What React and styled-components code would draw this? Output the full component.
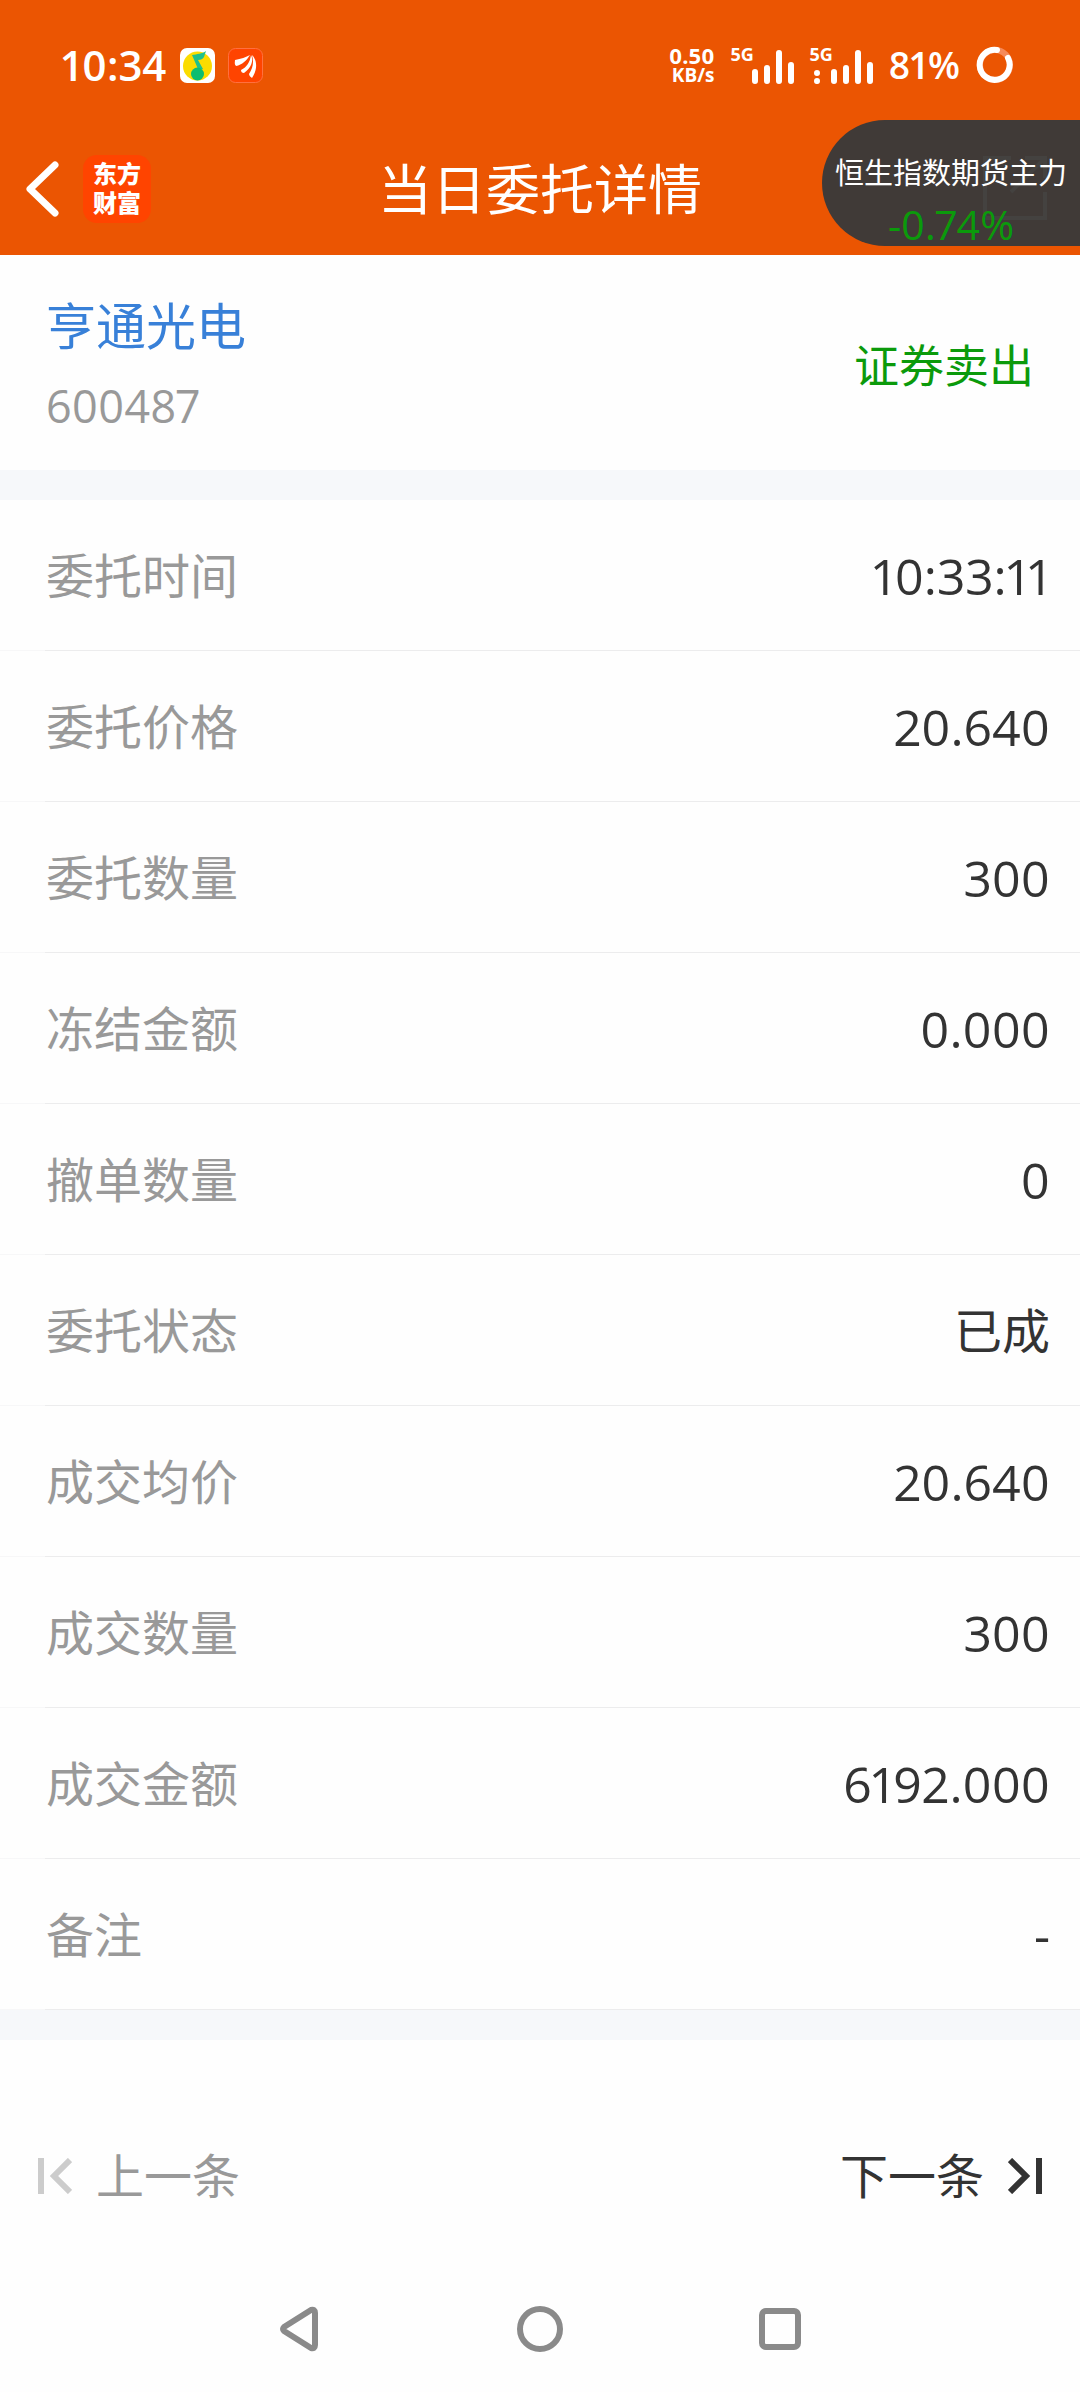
import React from "react";
import styled, { createGlobalStyle } from "styled-components";

const GlobalStyle = createGlobalStyle`
  *, *::before, *::after { box-sizing: border-box; }
  body {
    margin: 0;
    background: #fefefe;
    color: #333;
    font-family: "Open Sans", "Noto Sans CJK SC", sans-serif;
    font-variant-numeric: proportional-nums;
  }
  h1, h2, p, dl, dt, dd { margin: 0; font-weight: 400; }
  button {
    padding: 0;
    border: 0;
    background: none;
    color: inherit;
    font: inherit;
    cursor: pointer;
  }
  svg { display: block; flex: none; }
`;

const Page = styled.div`
  min-height: 100vh;
  display: flex;
  flex-direction: column;
`;

const TopArea = styled.header`
  position: relative;
  background: #eb5502;
  color: #fff;
`;

const StatusBar = styled.div`
  display: flex;
  justify-content: space-between;
  align-items: center;
  height: 130px;
  padding: 0 66px 0 62px;
`;

const StatusGroup = styled.div`
  display: flex;
  align-items: center;
  gap: ${(p) => p.$gap}px;
`;

const StatusText = styled.span`
  font-size: ${(p) => p.$size}px;
  line-height: 48px;
  font-weight: 600;
`;

const NetSpeed = styled.div`
  display: flex;
  flex-direction: column;
  align-items: flex-end;
  font-size: 22px;
  line-height: 20px;
  font-weight: 700;
`;

const SpeedUnit = styled.span`
  font-size: 19px;
`;

const Signal = styled.div`
  display: grid;
  width: 63px;
  height: 38px;

  > * { grid-area: 1 / 1; }
  > svg { align-self: end; justify-self: end; }
`;

const SignalLabel = styled.span`
  font-size: 18px;
  line-height: 16px;
  font-weight: 700;
`;

const TitleBar = styled.div`
  display: grid;
  grid-template-columns: 1fr auto 1fr;
  align-items: center;
  height: 125px;
  padding: 0 24px 8px;
`;

const TitleLeft = styled.div`
  display: flex;
  align-items: center;
  gap: 20px;
`;

const Title = styled.h1`
  font-size: 54px;
  line-height: 72px;
`;

const Brand = styled.div`
  display: flex;
  flex-direction: column;
  align-items: center;
  justify-content: center;
  width: 68px;
  height: 68px;
  padding-bottom: 2px;
  border-radius: 14px;
  background: #ff4400;
  font-family: "Lato", "Noto Sans CJK SC", sans-serif;
  font-size: 24px;
  line-height: 29px;
  font-weight: 900;
`;

const QuotePill = styled.aside`
  position: absolute;
  top: 120px;
  right: 0;
  width: 258px;
  height: 126px;
  border-radius: 63px 0 0 63px;
  background: #403a37;
  text-align: center;

  > svg { position: absolute; top: 36px; right: 33px; }
`;

const QuoteName = styled.p`
  position: relative;
  padding-top: 33px;
  font-size: 29px;
  line-height: 40px;
  white-space: nowrap;
`;

const QuoteChange = styled.p`
  position: relative;
  font-size: 41px;
  line-height: 62px;
  color: #0b9a0b;
`;

const StockCard = styled.section`
  display: flex;
  justify-content: space-between;
  align-items: center;
  height: 215px;
  padding: 6px 46px 0;
`;

const StockName = styled.h2`
  font-size: 50px;
  line-height: 80px;
  color: #3880d8;
`;

const StockCode = styled.p`
  font-size: 45px;
  line-height: 80px;
  color: #999;
`;

const Side = styled.p`
  font-size: 45px;
  line-height: 64px;
  color: #0b9a0b;
`;

const Band = styled.div`
  height: 30px;
  background: #f6f8fa;
`;

const Details = styled.dl`
  display: flex;
  flex-direction: column;
`;

const Row = styled.div`
  display: flex;
  justify-content: space-between;
  align-items: center;
  height: 151px;
  padding: 0 30px 0 46px;
  background: linear-gradient(to right, #f7f7f8 45px, #ececed 45px) bottom / 100% 1px no-repeat;
`;

const Label = styled.dt`
  font-size: 48px;
  line-height: 72px;
  color: #999;
`;

const Value = styled.dd`
  font-size: ${(p) => (p.$cjk ? 48 : 50)}px;
  line-height: 72px;
  color: #333;
`;

const Pager = styled.nav`
  display: flex;
  flex: 1;
  justify-content: space-between;
  align-items: flex-start;
  padding: 88px 38px 0;
`;

const PagerButton = styled.button`
  display: flex;
  align-items: center;
  gap: 24px;
  font-size: 48px;
  line-height: 96px;
  color: ${(p) => (p.disabled ? "#999" : "#333")};
`;

const SystemNav = styled.nav`
  display: grid;
  grid-template-columns: repeat(3, 1fr);
  height: 126px;
  padding: 0 calc(100% / 6);
`;

const SystemKey = styled.button`
  display: flex;
  align-items: center;
  justify-content: center;
`;

const rows = [
  ["委托时间", "10:33:11"],
  ["委托价格", "20.640"],
  ["委托数量", "300"],
  ["冻结金额", "0.000"],
  ["撤单数量", "0"],
  ["委托状态", "已成", true],
  ["成交均价", "20.640"],
  ["成交数量", "300"],
  ["成交金额", "6192.000"],
  ["备注", "-"],
];

const MusicIcon = () => (
  <svg width="35" height="35" viewBox="0 0 35 35" aria-hidden="true">
    <rect width="35" height="35" rx="7" fill="#fff" />
    <circle cx="17.5" cy="18" r="14.5" fill="#fbdc00" />
    <path d="M26 3C22 6 17 6 12 7l6 14h5l-5-9c3 0 5-1 6-3Z" fill="#1fc08c" />
    <circle cx="17.5" cy="26" r="6.5" fill="#0dbd70" />
  </svg>
);

const BrokerIcon = () => (
  <svg width="35" height="35" viewBox="0 0 35 35" aria-hidden="true">
    <rect x=".5" y=".5" width="34" height="34" rx="7" fill="#ff4400" stroke="#ff7040" />
    <g fill="#fff">
      <path d="M7 12C13 11 18 9 22 7c-3 5-8 10-14 11C6 16 7 14 7 12Z" />
      <path d="M13 22c6-3 9-8 10-15 3 6 0 13-7 18-2 0-3-1-3-3Z" />
      <path d="M21 26c4-6 5-12 3-19 6 6 5 16 0 23-1-1-3-2-3-4Z" />
    </g>
  </svg>
);

const SignalBars = ({ dual }) => (
  <svg width="60" height="35" viewBox="0 0 60 35" aria-hidden="true">
    <g stroke="#fff" strokeWidth="6" strokeLinecap="round">
      <path d="M21 23v9M33 19v13M45 4v28M57 16v16" />
      {dual && <path d="M4 24v.01M4 32v.01" />}
    </g>
  </svg>
);

const BatteryRing = () => (
  <svg width="38" height="38" viewBox="0 0 38 38" fill="none" strokeWidth="6" aria-hidden="true">
    <circle cx="19" cy="19" r="15" stroke="#f58a5a" />
    <path d="M32 12A15 15 0 1 1 21 4" stroke="#fff" strokeLinecap="round" />
  </svg>
);

const BackIcon = () => (
  <svg width="39" height="56" viewBox="0 0 39 56" fill="none" aria-hidden="true">
    <path d="M31 4 6 28l25 24" stroke="#fff" strokeWidth="7" strokeLinecap="round" strokeLinejoin="round" />
  </svg>
);

const ShareIcon = () => (
  <svg width="64" height="64" viewBox="0 0 64 64" fill="none" stroke="#444240" strokeWidth="4" aria-hidden="true">
    <path d="M28 2H2v60h60V36M42 2h20v20M62 2 28 36" />
  </svg>
);

const EdgeIcon = ({ next }) => (
  <svg width="34" height="36" viewBox="0 0 34 36" fill="none" stroke={next ? "#333" : "#ccc"} strokeWidth="6" aria-hidden="true">
    {next ? <path d="M2 2l16 16L2 34M31 0v36" /> : <path d="M32 2 16 18l16 16M3 0v36" />}
  </svg>
);

export default function App() {
  return (
    <Page>
      <GlobalStyle />
      <TopArea>
        <StatusBar>
          <StatusGroup $gap={13}>
            <StatusText $size={42}>10:34</StatusText>
            <MusicIcon />
            <BrokerIcon />
          </StatusGroup>
          <StatusGroup $gap={16}>
            <NetSpeed>
              <span>0.50</span>
              <SpeedUnit>KB/s</SpeedUnit>
            </NetSpeed>
            <Signal>
              <SignalLabel>5G</SignalLabel>
              <SignalBars />
            </Signal>
            <Signal>
              <SignalLabel>5G</SignalLabel>
              <SignalBars dual />
            </Signal>
            <StatusText $size={37}>81%</StatusText>
            <BatteryRing />
          </StatusGroup>
        </StatusBar>
        <TitleBar>
          <TitleLeft>
            <button type="button" aria-label="返回"><BackIcon /></button>
            <Brand>
              <span>东方</span>
              <span>财富</span>
            </Brand>
          </TitleLeft>
          <Title>当日委托详情</Title>
        </TitleBar>
        <QuotePill>
          <ShareIcon />
          <QuoteName>恒生指数期货主力</QuoteName>
          <QuoteChange>-0.74%</QuoteChange>
        </QuotePill>
      </TopArea>
      <main>
        <StockCard>
          <div>
            <StockName>亨通光电</StockName>
            <StockCode>600487</StockCode>
          </div>
          <Side>证券卖出</Side>
        </StockCard>
        <Band />
        <Details>
          {rows.map(([label, value, cjk]) => (
            <Row key={label}>
              <Label>{label}</Label>
              <Value $cjk={cjk}>{value}</Value>
            </Row>
          ))}
        </Details>
        <Band />
      </main>
      <Pager>
        <PagerButton type="button" disabled>
          <EdgeIcon />
          上一条
        </PagerButton>
        <PagerButton type="button">
          下一条
          <EdgeIcon next />
        </PagerButton>
      </Pager>
      <SystemNav>
        <SystemKey type="button" aria-label="后退">
          <svg width="42" height="46" viewBox="0 0 42 46" fill="none" stroke="#8a8a8a" strokeWidth="6" strokeLinejoin="round">
            <path d="M5 21 32 4q4-1 4 3v32q0 4-4 3L5 25q-2-2 0-4Z" />
          </svg>
        </SystemKey>
        <SystemKey type="button" aria-label="主页">
          <svg width="46" height="46" viewBox="0 0 46 46" fill="none" stroke="#8a8a8a" strokeWidth="6">
            <circle cx="23" cy="23" r="20" />
          </svg>
        </SystemKey>
        <SystemKey type="button" aria-label="最近任务">
          <svg width="42" height="42" viewBox="0 0 42 42" fill="none" stroke="#8a8a8a" strokeWidth="6">
            <rect x="3" y="3" width="36" height="36" rx="4" />
          </svg>
        </SystemKey>
      </SystemNav>
    </Page>
  );
}
